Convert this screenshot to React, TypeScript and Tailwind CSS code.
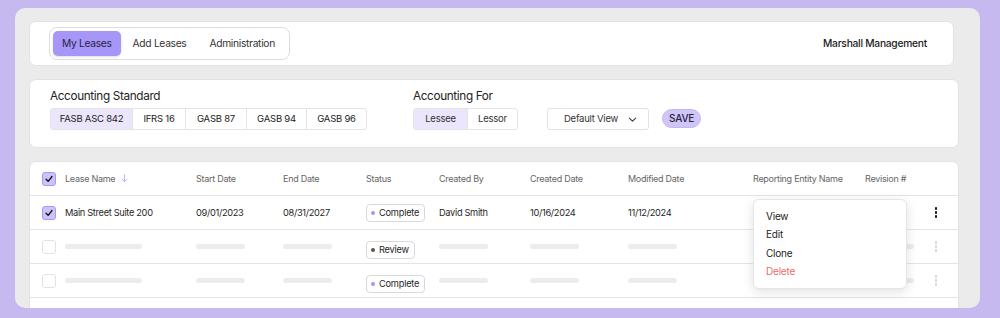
import React from "react";

// ─── Leases dashboard ─────────────────────────────────────────────────────────

const FONT = { fontFamily: "Inter, 'Noto Sans', sans-serif" };

const COLS = "grid grid-cols-[35px_131px_87px_83px_73px_91px_98px_125px_112px_56px_30px] items-center";

const Check = () => (
  <svg viewBox="0 0 12 12" className="w-[10px] h-[10px]" fill="none" stroke="#111" strokeWidth="1.6" strokeLinecap="round" strokeLinejoin="round">
    <path d="M2.5 6.3 L5 8.8 L9.6 3" />
  </svg>
);

const Box = ({ checked }: { checked?: boolean }) =>
  checked ? (
    <div className="w-[14px] h-[14px] rounded-[3px] bg-[#cdc3f8] border border-[#a898f5] flex items-center justify-center">
      <Check />
    </div>
  ) : (
    <div className="w-[14px] h-[14px] rounded-[3px] border border-[#e2e2e2] bg-white" />
  );

const Bar = ({ w = "w-[49px]" }: { w?: string }) => <div className={`h-[5px] rounded-full bg-[#ececec] ${w}`} />;

const Badge = ({ label, dot }: { label: string; dot: string }) => (
  <div className="inline-flex items-center gap-[4px] h-[18px] pl-[4px] pr-[5px] rounded-[4px] border border-[#d9d9d9] text-[9.25px] tracking-[-0.025em] text-[#1f1f1f]">
    <span className={`w-[4px] h-[4px] rounded-full ${dot}`} />
    {label}
  </div>
);

const Dots = ({ faded }: { faded?: boolean }) => (
  <div className="flex flex-col items-center gap-[1.5px]">
    {[0, 1, 2].map((i) => (
      <span key={i} className={`w-[2.5px] h-[2.5px] rounded-full ${faded ? "bg-[#d4d4d4]" : "bg-[#111]"}`} />
    ))}
  </div>
);

const SkeletonRow = ({ status, dot }: { status: string; dot: string }) => (
  <div className={`${COLS} h-[34px] border-b border-[#e4e4e4]`}>
    <div className="pl-[12px]"><Box /></div>
    <Bar w="w-[77px]" />
    <Bar />
    <Bar />
    <div><Badge label={status} dot={dot} /></div>
    <Bar />
    <Bar />
    <Bar />
    <Bar />
    <Bar />
    <div className="flex justify-center"><Dots faded /></div>
  </div>
);

export default function App() {
  return (
    <div style={FONT} className="w-[1000px] h-[318px] bg-[#c5b9ef] pt-[8px] pl-[15px] pr-[20px] overflow-hidden">
      <div className="h-[300px] bg-[#ebebeb] rounded-[10px] pl-[14px] pr-[21px] pt-[13px] overflow-hidden flex flex-col gap-[13px]">
        {/* Top nav */}
        <div className="h-[45px] mr-[5px] bg-white rounded-[7px] border border-[#e2e2e2] flex items-center pl-[19px] pr-[26px] shrink-0">
          <div className="flex items-center h-[33px] p-[3px] rounded-[8px] border border-[#dcdcdc] text-[10.25px] tracking-[-0.03em] text-[#333]">
            <div className="h-[25px] px-[9px] flex items-center rounded-[5px] bg-[#a596f8] text-[#2a2244] shadow-sm">My Leases</div>
            <div className="px-[12px]">Add Leases</div>
            <div className="pl-[11px] pr-[11px]">Administration</div>
          </div>
          <div className="ml-auto text-[10.25px] tracking-[-0.025em] font-medium text-[#222]">Marshall Management</div>
        </div>

        {/* Filters */}
        <div className="h-[69px] bg-white rounded-[7px] border border-[#e2e2e2] flex items-end pl-[20px] pb-[17px] shrink-0">
          <div className="flex flex-col gap-[4px]">
            <div className="text-[11.75px] tracking-[-0.03em] text-[#222] leading-[15px]">Accounting Standard</div>
            <div className="flex h-[22px] border border-[#e4e4e4] rounded-[3px] text-[9.5px] tracking-[-0.025em] text-[#222]">
              <div className="w-[81px] flex items-center justify-center bg-[#ebe6fc]">FASB ASC 842</div>
              <div className="w-[53px] flex items-center justify-center border-l border-[#e4e4e4]">IFRS 16</div>
              <div className="w-[61px] flex items-center justify-center border-l border-[#e4e4e4]">GASB 87</div>
              <div className="w-[60px] flex items-center justify-center border-l border-[#e4e4e4]">GASB 94</div>
              <div className="w-[60px] flex items-center justify-center border-l border-[#e4e4e4]">GASB 96</div>
            </div>
          </div>
          <div className="flex flex-col gap-[4px] ml-[46px]">
            <div className="text-[11.75px] tracking-[-0.03em] text-[#222] leading-[15px]">Accounting For</div>
            <div className="flex h-[22px] border border-[#e4e4e4] rounded-[3px] text-[9.5px] tracking-[-0.025em] text-[#333]">
              <div className="w-[53px] flex items-center justify-center bg-[#ebe6fc]">Lessee</div>
              <div className="w-[50px] flex items-center justify-center border-l border-[#e4e4e4]">Lessor</div>
            </div>
          </div>
          <div className="ml-[29px] w-[102px] h-[22px] border border-[#e2e2e2] rounded-[3px] flex items-center pl-[16px] pr-[10px] text-[9.5px] tracking-[-0.025em] text-[#333]">
            Default View
            <svg viewBox="0 0 12 12" className="ml-auto w-[11px] h-[11px]" fill="none" stroke="#333" strokeWidth="1.1" strokeLinecap="round" strokeLinejoin="round">
              <path d="M2.5 4.5 L6 7.8 L9.5 4.5" />
            </svg>
          </div>
          <div className="ml-[13px] mb-[2px] h-[19px] px-[6px] rounded-full bg-[#cfc6f7] border border-[#c3b8f3] flex items-center text-[10px] tracking-[-0.02em] font-medium text-[#2a2244]">SAVE</div>
        </div>

        {/* Table */}
        <div className="relative bg-white rounded-t-[7px] border border-[#e2e2e2] flex-1 min-h-[160px]">
          <div className={`${COLS} h-[34px] border-b border-[#e4e4e4] text-[9px] tracking-[-0.03em] text-[#666]`}>
            <div className="pl-[12px]"><Box checked /></div>
            <div className="flex items-center gap-[5px]">
              Lease Name
              <svg viewBox="0 0 12 12" className="w-[9px] h-[9px]" fill="none" stroke="#b3a8f0" strokeWidth="1.2" strokeLinecap="round" strokeLinejoin="round">
                <path d="M6 1.5 V10 M2.8 7 L6 10.2 L9.2 7" />
              </svg>
            </div>
            <div>Start Date</div>
            <div>End Date</div>
            <div>Status</div>
            <div>Created By</div>
            <div>Created Date</div>
            <div>Modified Date</div>
            <div>Reporting Entity Name</div>
            <div>Revision #</div>
            <div />
          </div>

          <div className={`${COLS} h-[34px] border-b border-[#e4e4e4] text-[9.25px] tracking-[-0.035em] text-[#1f1f1f]`}>
            <div className="pl-[12px]"><Box checked /></div>
            <div>Main Street Suite 200</div>
            <div>09/01/2023</div>
            <div>08/31/2027</div>
            <div><Badge label="Complete" dot="bg-[#a596f8]" /></div>
            <div>David Smith</div>
            <div>10/16/2024</div>
            <div>11/12/2024</div>
            <div />
            <div />
            <div className="flex justify-center"><Dots /></div>
          </div>

          <SkeletonRow status="Review" dot="bg-[#555]" />
          <SkeletonRow status="Complete" dot="bg-[#a596f8]" />
          <div className={`${COLS} h-[34px]`} />

          {/* Row actions menu */}
          <div className="absolute left-[723px] top-[37px] w-[154px] h-[90px] bg-white rounded-[6px] border border-[#e6e6e6] shadow-[0_3px_12px_rgba(0,0,0,0.12)] flex flex-col justify-center gap-[5px] pl-[12px] text-[10px] tracking-[-0.02em] leading-[13.5px]">
            <div className="text-[#222]">View</div>
            <div className="text-[#222]">Edit</div>
            <div className="text-[#222]">Clone</div>
            <div className="text-[#ee6a6a]">Delete</div>
          </div>
        </div>
      </div>
    </div>
  );
}
